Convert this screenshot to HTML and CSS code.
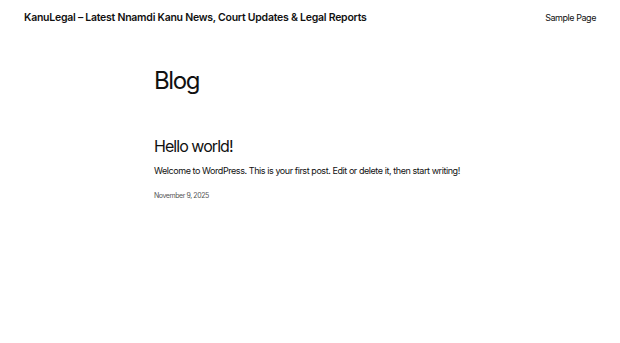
FILE: index.html
```html
<!DOCTYPE html>
<html lang="en">

<head>
    <meta charset="UTF-8">
    <meta name="viewport" content="width=device-width, initial-scale=1.0">
    <title>KanuLegal</title>
    <link rel="stylesheet" href="styles.css">
</head>

<body>
    <header class="siteHeader">
        <a class="siteTitle" href="#">KanuLegal – Latest Nnamdi Kanu News, Court Updates &amp; Legal Reports</a>
        <nav class="siteNav">
            <a href="#">Sample Page</a>
        </nav>
    </header>

    <main class="content">
        <h1 class="pageTitle">Blog</h1>

        <article class="post">
            <h2 class="postTitle"><a href="#">Hello world!</a></h2>
            <p class="postExcerpt">Welcome to WordPress. This is your first post. Edit or delete it, then start writing!</p>
            <div class="postDate">November 9, 2025</div>
        </article>
    </main>
</body>

</html>
```

FILE: styles.css
```css
* {
    margin: 0;
    padding: 0;
    box-sizing: border-box;
}

html,
body {
    width: 100%;
    height: 100%;
    background-color: #fff;
}

body {
    font-family: Inter, "Noto Sans", sans-serif;
    color: #111;
}

a {
    color: inherit;
    text-decoration: none;
}

.siteHeader {
    display: flex;
    justify-content: space-between;
    align-items: center;
    height: 34px;
    padding: 0 24px;
}

.siteTitle {
    font-size: 10.5px;
    font-weight: 600;
    letter-spacing: -0.25px;
}

.siteNav {
    font-size: 9px;
    letter-spacing: -0.45px;
}

.content {
    width: 320px;
    margin-left: 154px;
    padding-top: 33px;
}

.pageTitle {
    font-size: 24px;
    font-weight: 400;
    letter-spacing: -1.4px;
    line-height: 1.2;
}

.post {
    padding-top: 41px;
}

.postTitle {
    font-size: 16px;
    font-weight: 400;
    letter-spacing: -0.95px;
    line-height: 1.2;
}

.postExcerpt {
    margin-top: 8px;
    font-size: 9px;
    letter-spacing: -0.43px;
    line-height: 1.5;
}

.postDate {
    margin-top: 14px;
    font-size: 7px;
    color: #555;
    letter-spacing: -0.43px;
}
```
